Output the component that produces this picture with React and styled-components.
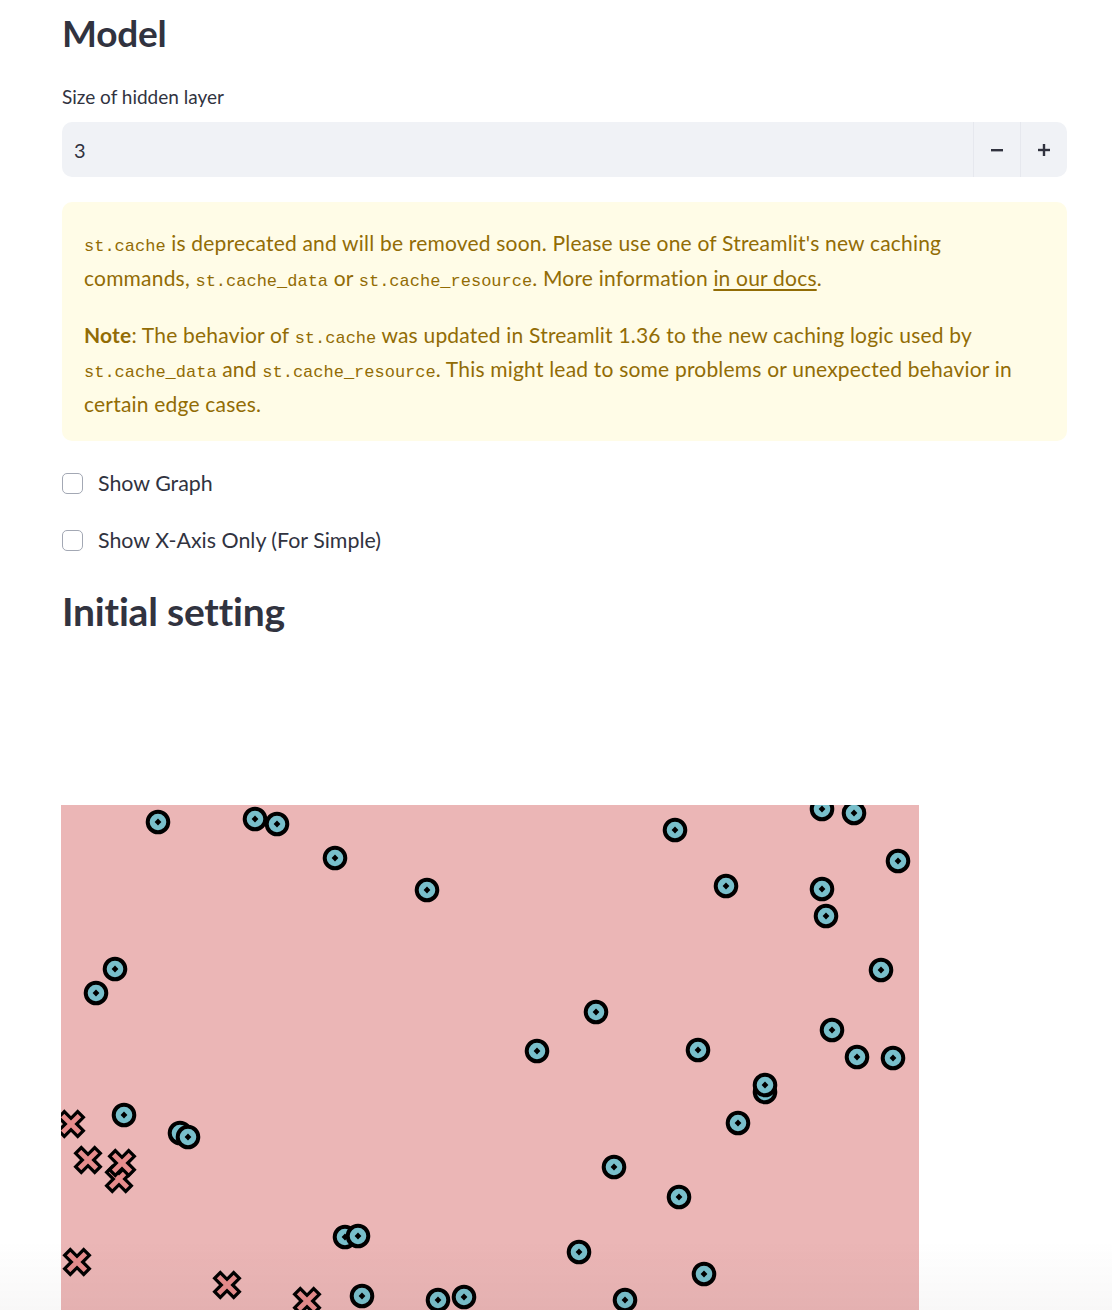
import React from 'react';
import styled, { createGlobalStyle } from 'styled-components';

const GlobalStyle = createGlobalStyle`
    html, body {
        margin: 0;
        padding: 0;
        background: #ffffff;
    }
    body {
        font-family: Lato, "Noto Sans", sans-serif;
        color: #31333f;
    }
`;

const Page = styled.main`
    width: 1005px;
    padding: 0 45px 0 62px;
    display: flex;
    flex-direction: column;
`;

const Heading = styled.h2`
    margin: ${props => props.$top || 0}px 0 0;
    font-size: ${props => props.$size || 39}px;
    font-weight: 700;
    line-height: 66px;
    letter-spacing: -0.2px;
    color: #31333f;
`;

const Label = styled.label`
    margin-top: 17px;
    font-size: 19px;
    line-height: 28px;
    color: #31333f;
`;

const NumberInput = styled.div`
    margin-top: 11px;
    height: 55px;
    display: flex;
    align-items: stretch;
    background: #f0f2f6;
    border-radius: 10px;
    overflow: hidden;
`;

const InputValue = styled.div`
    flex: 1;
    display: flex;
    align-items: center;
    padding-left: 12px;
    font-size: 20px;
    color: #31333f;
`;

const StepButton = styled.div`
    width: 46px;
    display: flex;
    align-items: center;
    justify-content: center;
    border-left: 1px solid #e6e8ee;
`;

const Alert = styled.div`
    margin-top: 25px;
    padding: 24px 22px 20px;
    background: #fffce7;
    border-radius: 10px;
    color: #926c05;
    font-size: 21px;
    line-height: 34.5px;
    letter-spacing: 0.2px;
`;

const Para = styled.p`
    margin: ${props => (props.$first ? 0 : '22.5px')} 0 0;
`;

const Code = styled.code`
    font-family: "Liberation Mono", "DejaVu Sans Mono", monospace;
    font-size: 17px;
    line-height: 1;
    letter-spacing: 0;
`;

const DocLink = styled.a`
    color: inherit;
    text-decoration: underline;
    text-underline-offset: 3px;
`;

const CheckRow = styled.div`
    margin-top: ${props => props.$top}px;
    height: 32px;
    display: flex;
    align-items: center;
    gap: 15px;
    font-size: 21.4px;
    color: #31333f;
`;

const Box = styled.span`
    width: 19px;
    height: 19px;
    border: 1.5px solid #a3a8b4;
    border-radius: 5px;
    background: #fff;
`;

const Chart = styled.svg`
    display: block;
    margin-top: 161px;
    width: 858px;
    height: 640px;
    margin-left: -1px;
    background: #ebb6b6;
`;

const BottomFade = styled.div`
    position: fixed;
    left: 0;
    right: 0;
    bottom: 0;
    height: 70px;
    pointer-events: none;
    background: linear-gradient(to bottom, rgba(0, 0, 0, 0), rgba(60, 40, 40, 0.035));
`;

const circles = [
    [158, 822], [255, 819], [277, 824], [335, 858], [427, 890], [675, 830],
    [822, 809], [854, 813], [898, 861], [726, 886], [822, 889], [826, 916],
    [881, 970], [115, 969], [96, 993], [596, 1012], [537, 1051], [698, 1050],
    [832, 1030], [857, 1057], [893, 1058], [765, 1092], [765, 1085], [738, 1123],
    [124, 1115], [180, 1133], [188, 1137], [614, 1167], [679, 1197], [345, 1237],
    [358, 1236], [579, 1252], [704, 1274], [362, 1296], [438, 1300], [464, 1297],
    [625, 1300],
];

const crosses = [
    [71, 1124], [88, 1160], [119, 1179], [122, 1163], [77, 1262], [227, 1285], [307, 1301],
];

const X0 = 61;
const Y0 = 805;

const plusPoints = (a, l) => [
    [-a, -l], [a, -l], [a, -a], [l, -a], [l, a], [a, a],
    [a, l], [-a, l], [-a, a], [-l, a], [-l, -a], [-a, -a],
].map(p => p.join(',')).join(' ');

const Circle = ({ x, y }) => (
    <g transform={`translate(${x - X0} ${y - Y0})`}>
        <circle r="10.3" fill="#78bfcb" stroke="#000" strokeWidth="4" />
        <rect x="-2.4" y="-2.4" width="4.8" height="4.8" fill="#000" transform="rotate(45)" />
    </g>
);

const Cross = ({ x, y }) => (
    <g transform={`translate(${x - X0} ${y - Y0}) rotate(45)`}>
        <polygon points={plusPoints(4, 13.5)} fill="#e68c8c" stroke="#000" strokeWidth="3.2" strokeLinejoin="miter" />
    </g>
);

const Minus = () => (
    <svg width="14" height="14" viewBox="0 0 14 14">
        <rect x="1" y="6" width="12" height="2.4" fill="#31333f" />
    </svg>
);

const Plus = () => (
    <svg width="14" height="14" viewBox="0 0 14 14">
        <rect x="1" y="5.8" width="12" height="2.4" fill="#31333f" />
        <rect x="5.8" y="1" width="2.4" height="12" fill="#31333f" />
    </svg>
);

const App = () => (
    <>
        <GlobalStyle />
        <Page>
            <Heading $size={37}>Model</Heading>
            <Label>Size of hidden layer</Label>
            <NumberInput>
                <InputValue>3</InputValue>
                <StepButton><Minus /></StepButton>
                <StepButton><Plus /></StepButton>
            </NumberInput>
            <Alert>
                <Para $first>
                    <Code>st.cache</Code> is deprecated and will be removed soon. Please use one of
                    Streamlit's new caching commands, <Code>st.cache_data</Code> or{' '}
                    <Code>st.cache_resource</Code>. More information <DocLink href="#">in our docs</DocLink>.
                </Para>
                <Para>
                    <strong>Note</strong>: The behavior of <Code>st.cache</Code> was updated in Streamlit 1.36
                    to the new caching logic used by <Code>st.cache_data</Code> and{' '}
                    <Code>st.cache_resource</Code>. This might lead to some problems or unexpected behavior
                    in certain edge cases.
                </Para>
            </Alert>
            <CheckRow $top={26}><Box />Show Graph</CheckRow>
            <CheckRow $top={25}><Box />Show X-Axis Only (For Simple)</CheckRow>
            <Heading $top={22}>Initial setting</Heading>
            <Chart viewBox="0 0 858 640">
                {circles.map(([x, y], i) => <Circle key={`c${i}`} x={x} y={y} />)}
                {crosses.map(([x, y], i) => <Cross key={`x${i}`} x={x} y={y} />)}
            </Chart>
        </Page>
        <BottomFade />
    </>
);

export default App;
